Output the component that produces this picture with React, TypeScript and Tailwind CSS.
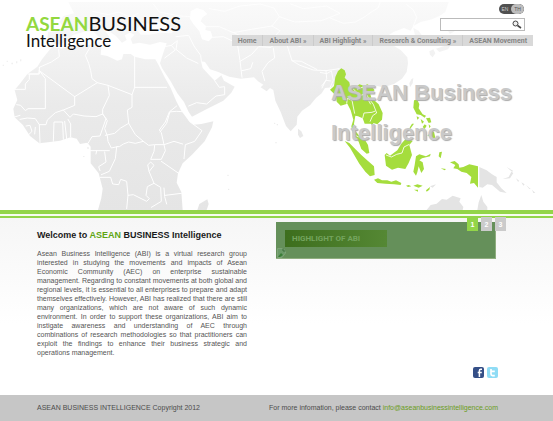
import type { ReactNode } from "react";

const navItems = ["Home", "About ABI »", "ABI Highlight »", "Research & Consulting »", "ASEAN Movement"];

const introLines = [
    "Asean Business Intelligence (ABI) is a virtual research group",
    "interested in studying the movements and impacts of Asean",
    "Economic Community (AEC) on enterprise sustainable",
    "management. Regarding to constant movements at both global and",
    "regional levels, it is essential to all enterprises to prepare and adapt",
    "themselves effectively. However, ABI has realized that there are still",
    "many organizations, which are not aware of such dynamic",
    "environment. In order to support these organizations, ABI aim to",
    "instigate awareness and understanding of AEC through",
    "combinations of research methodologies so that practitioners can",
    "exploit the findings to enhance their business strategic and",
    "operations management.",
];

function WorldMap() {
    return (
        <svg
            className="absolute inset-0 h-full w-full"
            viewBox="0 0 1659 630"
            preserveAspectRatio="xMidYMin slice"
            aria-hidden="true"
        >
            <defs>
                <linearGradient id="land" gradientUnits="userSpaceOnUse" x1="0" y1="0" x2="0" y2="630">
                    <stop offset="0" stopColor="#fafafa" />
                    <stop offset="0.15" stopColor="#f6f6f6" />
                    <stop offset="0.28" stopColor="#f1f1f1" />
                    <stop offset="0.5" stopColor="#eaeaea" />
                    <stop offset="1" stopColor="#e5e5e5" />
                </linearGradient>
            </defs>

            <g fill="url(#land)">
                {/* Europe and Asia */}
                <path d="M205 6 H1346 L1336 36 L1318 48 L1296 58 L1262 66 L1240 78 L1232 92 L1212 84 L1180 96 L1166 106 L1172 116 L1196 106 L1216 112 L1200 124 L1176 134 L1202 150 L1222 172 L1224 190 L1220 216 L1206 236 L1182 252 L1150 262 L1120 256 L1090 262 L1040 286 L1000 262 L975 264 L965 280 L948 294 L930 316 L906 332 L892 350 L890 374 L872 394 L858 378 L842 336 L826 302 L820 270 L810 264 L800 274 L782 262 L790 254 L774 244 L762 232 L722 236 L688 230 L668 222 L655 216 L630 208 L615 186 L603 184 L608 204 L628 226 L644 242 L664 226 L672 242 L704 260 L694 278 L670 302 L622 326 L576 350 L566 336 L552 306 L532 280 L512 244 L486 204 L480 190 L490 158 L500 130 L480 126 L450 134 L418 128 L398 132 L392 116 L404 104 L390 98 L374 106 L380 120 L366 128 L348 108 L330 96 L312 88 L328 110 L316 126 L296 110 L278 92 L250 96 L220 104 L206 118 L180 134 L156 130 L142 120 L144 96 L176 92 L196 88 L178 66 L190 48 L222 40 Z" />
                {/* Korea */}
                <path d="M1240 84 L1256 92 L1270 112 L1266 130 L1254 128 L1246 110 Z" />
                {/* Africa */}
                <path d="M156 140 L184 146 L216 136 L262 134 L294 134 L304 142 L302 164 L322 168 L352 182 L366 178 L370 162 L392 162 L404 170 L436 178 L466 178 L474 192 L494 232 L512 264 L530 306 L544 332 L566 362 L580 374 L604 372 L640 364 L636 382 L614 424 L576 464 L548 490 L534 520 L530 548 L544 576 L548 630 H294 L304 594 L308 566 L296 520 L272 490 L272 462 L272 440 L262 428 L240 432 L230 416 L212 412 L180 422 L150 426 L118 430 L90 408 L68 374 L44 352 L40 326 L52 300 L44 270 L62 248 L82 222 L112 200 L126 178 Z" />
                {/* islands */}
                <path d="M592 630 L598 612 L622 598 L626 612 L620 630 Z M894 386 L904 394 L910 408 L900 414 L894 404 Z" />
                <path d="M1234 238 L1240 234 L1238 250 L1230 262 L1228 250 Z M1288 154 L1300 148 L1306 160 L1298 172 L1290 164 Z M1308 146 L1332 138 L1346 126 L1348 108 L1354 112 L1354 132 L1344 148 L1318 156 Z M1344 92 L1352 86 L1364 94 L1350 102 Z" />
                <circle cx="824" cy="370" r="2" />
                <circle cx="832" cy="374" r="2" />
                <circle cx="828" cy="428" r="2" />
                <circle cx="684" cy="526" r="2" />
                <circle cx="686" cy="568" r="2" />
                <path d="M8 194 h4 v4 h-4z M20 182 h4 v4 h-4z M34 188 h5 v5 h-5z M48 184 h4 v6 h-4z M60 178 h4 v6 h-4z M250 468 h3 v3 h-3z M262 442 h4 v4 h-4z" />
            </g>

            {/* inland seas */}
            <g fill="#fff">
                <path d="M572 34 L590 24 L610 30 L622 42 L608 52 L602 64 L618 78 L616 90 L632 94 L638 112 L626 124 L606 118 L598 94 L580 72 L570 56 Z" />
                <path d="M410 88 L428 68 L452 72 L468 62 L494 70 L528 90 L514 100 L480 98 L448 104 L422 104 Z" opacity="0.8" />
            </g>

            {/* borders */}
            <g fill="none" stroke="#fff" strokeWidth="3" strokeLinejoin="round" strokeLinecap="round">
                <path d="M118 202 L154 186 L178 170 L176 148 M118 212 L224 290 L292 248 L276 236 L272 212 L266 190 L256 166 L274 136 M84 222 H118 V202 M118 210 L116 222 H88 V238 L76 252 V268 H46" />
                <path d="M118 212 L136 236 V326 H84 L76 332 L62 316 L50 314 M224 290 V316 L190 330 L166 338 L142 360 L138 374 L118 374 L106 356 L82 354 L60 358 M190 330 L210 352 L220 342 L252 348 L288 350 L308 342" />
                <path d="M292 248 L324 256 L328 286 L308 328 L308 342 L318 356 L300 408 L276 410 L264 430 M324 256 L396 284 L404 262 V170 M404 262 H500 M396 284 V322 L382 330 L386 370 L362 384 L344 400 L316 406" />
                <path d="M308 342 L322 362 L314 386 L322 408 L324 424 L334 444 L352 440 M386 370 L406 404 L430 424 L406 430 L386 426 L370 432 L358 440 L350 440 L346 476 L328 514 L304 524" />
                <path d="M430 424 L446 436 L464 434 L492 434 L484 398 L478 390 L496 366 L508 336 L528 334 M464 436 L462 454 L452 478 H484 L496 452 L492 434 L522 424 L548 432" />
                <path d="M444 494 L452 486 L462 496 L448 514 Z M484 484 L536 520 M448 516 L462 550 L442 560 L438 586 L448 596 L440 604 L400 584 L384 586 L380 544 L362 538 L356 554 L338 552 L332 532 H300" />
                <path d="M462 550 L482 562 L484 604 L454 622 M492 564 L494 590 L500 612 M496 586 L544 580 M384 586 L380 626 M272 452 H328 M290 452 L288 462 M314 456 L318 486 L296 500 L300 512" />
                <path d="M160 424 L162 366 H188 L190 418 M194 364 L200 416 M204 358 L212 372 L212 410 M120 428 L118 374 M78 378 L90 376 L96 394 L86 404 M106 382 L104 402" />
                <path d="M530 318 L510 334 L500 370 L480 396 M530 334 L562 336 L568 364 L606 392 L584 424 L556 434 L552 476 M40 352 L60 346" />
                <path d="M484 142 L514 136 L526 150 L494 174 M514 136 L532 122 L528 148 L560 174 L594 190 M566 318 L590 308 L620 312 L648 288 L674 284 L674 260 L658 262 L644 242 M528 110 L566 106 L582 138 L602 166 L604 184" />
                <path d="M638 112 L670 110 L712 130 L720 182 L726 232 M720 184 L754 164 L776 140 L812 142 M726 212 L752 206 L758 188 M820 144 L824 174 L804 188 L786 214 L794 242" />
                <path d="M812 142 L850 118 L900 140 L936 118 L996 128 L1040 106 M856 120 L876 182 L900 196 L940 210 L978 212 L980 236 L966 264 M876 182 L904 184 L950 208 M978 212 L1018 206 L1008 244 L996 262" opacity="0.9" />
                <path d="M618 80 L658 80 L700 98 L754 88 L816 78 L838 50 L822 24 L780 12 L720 18 L674 34 L628 26 M838 50 L884 66 L964 62 L1020 40 L980 18 L910 26 L872 12 M700 98 L742 116 L812 122 L840 92 L816 78" opacity="0.8" />
                <path d="M990 54 L1030 70 L1066 66 L1092 52 L1114 36 L1134 24 L1140 8 M1220 14 L1240 30 L1250 52 L1240 78" opacity="0.8" />
                <path d="M218 100 L248 84 L278 92 M278 34 L324 44 L356 36 L392 52 L414 40 M330 96 L350 80 L390 84 M460 12 L478 36 L540 48 L572 50" opacity="0.7" />
            </g>

            {/* South East Asia */}
            <g transform="translate(960 165)">
                <g fill="#a5dd3d">
                    <path d="M64 40 L74 46 L78 58 L74 68 L88 82 L90 92 L106 98 L118 88 L132 92 L142 88 L156 96 L164 106 L150 114 L154 128 L176 148 L188 174 L186 194 L172 208 L160 204 L158 214 L152 206 L134 206 L128 190 L114 184 L106 182 L102 206 L108 230 L118 242 L132 250 L144 270 L148 294 L140 296 L124 282 L116 260 L98 234 L94 214 L100 194 L92 166 L82 146 L62 152 L50 140 L48 122 L30 104 L42 94 L46 66 L54 48 Z" />
                    <path d="M74 258 L88 264 L108 284 L124 300 L144 318 L162 334 L164 360 L150 364 L136 350 L118 326 L104 302 L90 278 Z" />
                    <path d="M162 374 L174 370 L186 376 L202 376 L214 380 L228 376 L244 384 L242 390 L222 388 L196 386 L172 384 Z M258 392 L266 390 L274 394 L264 396 Z M280 392 L292 388 L308 392 L296 398 Z M282 404 L294 404 L294 410 Z M318 406 L330 396 L328 404 L320 410 Z" />
                    <path d="M194 300 L200 294 L210 302 L232 286 L244 266 L260 248 L278 258 L268 270 L276 300 L266 324 L256 342 L234 338 L216 344 L198 332 Z" />
                    <path d="M288 304 L298 298 L318 304 L332 296 L330 304 L306 310 L298 316 L308 322 L312 342 L304 354 L296 334 L292 352 L288 362 L280 350 L284 330 Z M358 292 L366 290 L362 310 L356 304 Z M362 340 L378 342 L374 346 Z" />
                    <path d="M390 322 L404 318 L416 328 L418 338 L430 336 L448 328 L474 334 V398 L462 384 L450 386 L454 366 L440 354 L424 350 L412 342 L400 340 L406 330 Z" />
                    <path d="M282 136 L292 134 L298 148 L296 160 L308 178 L318 182 L314 188 L302 180 L290 178 L280 158 Z M276 206 L282 206 L266 228 L270 216 Z M290 184 L298 188 L292 194 Z M302 192 L312 200 L306 206 Z M318 190 L330 188 L334 202 L326 204 Z M314 208 L320 212 L314 222 L308 216 Z M326 208 L332 214 L328 220 Z M322 242 L332 232 L342 230 L346 248 L336 254 L328 244 Z" />
                </g>
                <g fill="none" stroke="#fff" strokeWidth="2.5">
                    <path d="M80 146 L82 130 L96 136 L100 156 L104 176 M90 92 L108 110 L120 122 L132 118 L142 130 L152 148 M112 104 L128 96 L146 130 L160 148 L170 174 L158 182 L150 200 M128 190 L132 174 L156 172 L166 168 M96 236 L116 246" />
                    <path d="M198 300 L214 306 L230 298 L246 294 L252 276 L268 268" />
                    <path d="M0 52 L20 56 L34 48 L40 76 L30 98 M4 94 L18 76 L34 78" />
                </g>
                <g fill="#e4e4e4">
                    <path d="M478 336 L500 346 L516 358 L530 366 L530 382 L544 400 L560 414 L540 410 L516 390 L502 388 L488 398 L478 396 Z" />
                    <path d="M548 372 L566 366 L574 350 L580 354 L570 370 Z M560 336 L580 348 L576 350 Z M588 370 l10 8 l-4 2z M604 382 l10 6 l-4 4z M618 390 l14 12 l-4 0z M636 404 l10 10 l-6 0z" />
                    <path d="M320 465 L332 450 L350 446 L366 432 L380 434 L398 422 L422 430 L418 440 L430 456 L428 465 Z M472 465 L476 442 L484 420 L490 440 L502 456 L502 465 Z M330 394 L348 388 L338 398 Z" />
                </g>
            </g>
        </svg>
    );
}

function PagerButton({ active, children }: { active?: boolean; children: ReactNode }) {
    return (
        <button
            type="button"
            className={`h-3.5 w-[11px] text-[7px] leading-none font-bold text-white ${active ? "bg-[#93d549]" : "bg-[#cbcbcb]"}`}
        >
            {children}
        </button>
    );
}

function Header() {
    return (
        <header className="relative h-[210px] overflow-hidden bg-white">
            <WorldMap />
            <div className="relative flex items-start justify-between pr-5 pl-[26px]">
                <a href="#home" className="pt-3 font-[Lato,sans-serif] text-[#111]">
                    <span className="flex items-baseline leading-[22px]">
                        <span className="text-[19px] font-bold text-[#93d83f]">ASEAN</span>
                        <span className="text-[20px]">BUSINESS</span>
                    </span>
                    <span className="block text-[17px] leading-3">Intelligence</span>
                </a>
                <div className="flex flex-col items-end pt-1">
                    <div className="mr-[9px] flex h-2.5 w-[25px] overflow-hidden rounded-full bg-[#505050] text-[5px] leading-[10px]">
                        <button type="button" className="w-3 text-[#cfcfcf]">EN</button>
                        <button type="button" className="flex-1 rounded-full bg-[#bdbdbd] text-[#555]">TH</button>
                    </div>
                    <form className="mt-1 mr-2 flex h-[13px] w-[85px] border border-[#bbb] bg-white">
                        <input aria-label="Search" className="min-w-0 flex-1 px-1 text-[7px] outline-none" />
                        <button type="submit" aria-label="Submit search" className="w-3">
                            <svg viewBox="0 0 10 10" className="h-2.5 w-2.5" fill="none" stroke="#444">
                                <circle cx="3.5" cy="3.5" r="2.5" fill="#eee" />
                                <path d="M5.5 5.5 L9 8" strokeWidth="1.6" />
                            </svg>
                        </button>
                    </form>
                    <nav className="mt-1 flex h-[11px] bg-[#d9d9d9] font-[Roboto,sans-serif] text-[7px] leading-[12px] font-bold text-[#858585]">
                        {navItems.map((item) => (
                            <a key={item} href="#menu" className="border-r border-[#cbcbcb] px-[6px] whitespace-nowrap last:border-r-0">
                                {item}
                            </a>
                        ))}
                    </nav>
                </div>
            </div>
            <h1 className="absolute top-[73px] left-[331px] w-[190px] text-[22px] leading-10 font-bold text-[#c9c9c9] [text-shadow:1px_1px_1px_#aaa]">
                ASEAN Business Intelligence
            </h1>
        </header>
    );
}

export default function App() {
    return (
        <div className="bg-white font-['Liberation_Sans',Arial,sans-serif]">
            <Header />
            <div className="h-2 border-t-4 border-b-2 border-[#93d549] bg-[#f7fcef]" />

            <main className="grid min-h-[177px] grid-cols-[210fr_220fr] gap-x-[29px] bg-linear-to-b from-[#f6f6f6] to-white to-60% pr-[57px] pl-[37px]">
                <section className="pt-[11px]">
                    <h2 className="text-[9px] leading-3 font-bold whitespace-nowrap text-[#1a1a1a]">
                        Welcome to <span className="text-[#5fa514]">ASEAN</span> BUSINESS Intelligence
                    </h2>
                    <p className="pt-2 text-[7px] leading-[9px] text-[#555]">
                        {introLines.map((line) => (
                            <span key={line} className="block text-justify whitespace-nowrap [text-align-last:justify] last:[text-align-last:left]">
                                {line}
                            </span>
                        ))}
                    </p>
                </section>

                <section className="relative flex flex-col justify-between pt-1 pb-[17px]">
                    <div className="relative h-[37px] border-r border-b border-[#8fae7f] bg-[#65905a] px-[9px] pt-2">
                        <h2 className="h-[17px] w-[102px] bg-linear-to-r from-[#3d6e1d] to-[#558834] pl-[7px] font-['Liberation_Sans_Narrow',Roboto,sans-serif] text-[8px] leading-[17px] font-bold text-[#74a45e]">
                            HIGHLIGHT OF ABI
                        </h2>
                        <svg viewBox="0 0 9 10" className="absolute bottom-0 left-px h-2.5 w-[9px]" aria-hidden="true">
                            <path d="M0.5 0.5 H6 L8.5 3 V5 L5 9.5 H0.5 Z" fill="#6b9a68" stroke="#7da377" />
                            <path d="M1 9 L4 5 L6 7 L3 9 Z" fill="#397d36" />
                            <path d="M6 0.5 V3 H8.5" fill="none" stroke="#416f3c" />
                        </svg>
                    </div>
                    <div className="absolute -top-px -right-2.5 flex gap-[3px]">
                        <PagerButton active>1</PagerButton>
                        <PagerButton>2</PagerButton>
                        <PagerButton>3</PagerButton>
                    </div>
                    <div className="-mr-0.5 flex justify-end gap-[3px]">
                        <a href="#facebook" aria-label="Facebook">
                            <svg viewBox="0 0 11 11" className="h-[11px] w-[11px]">
                                <rect width="11" height="11" rx="2" fill="#354f87" />
                                <path d="M9 2.2 H7.8 Q6.4 2.2 6.4 3.7 V10 M4.7 5.6 H8.8" fill="none" stroke="#fff" strokeWidth="1.5" />
                            </svg>
                        </a>
                        <a href="#twitter" aria-label="Twitter">
                            <svg viewBox="0 0 11 11" className="h-[11px] w-[11px]">
                                <rect width="11" height="11" rx="2" fill="#8fdcf5" />
                                <path d="M4 2 V7 Q4 8.6 5.5 8.6 H7.8 M4 4.4 H7.8" fill="none" stroke="#fff" strokeWidth="1.7" />
                            </svg>
                        </a>
                    </div>
                </section>
            </main>

            <footer className="flex h-[26px] items-center justify-between bg-[#c6c6c6] pr-[55px] pl-[37px] text-[7px] text-[#4c4c4c]">
                <p>ASEAN BUSINESS INTELLIGENCE Copyright 2012</p>
                <p>
                    For more infomation, please contact{" "}
                    <a href="mailto:info@aseanbusinessintelligence.com" className="text-[#6a9c22]">
                        info@aseanbusinessintelligence.com
                    </a>
                </p>
            </footer>
        </div>
    );
}
